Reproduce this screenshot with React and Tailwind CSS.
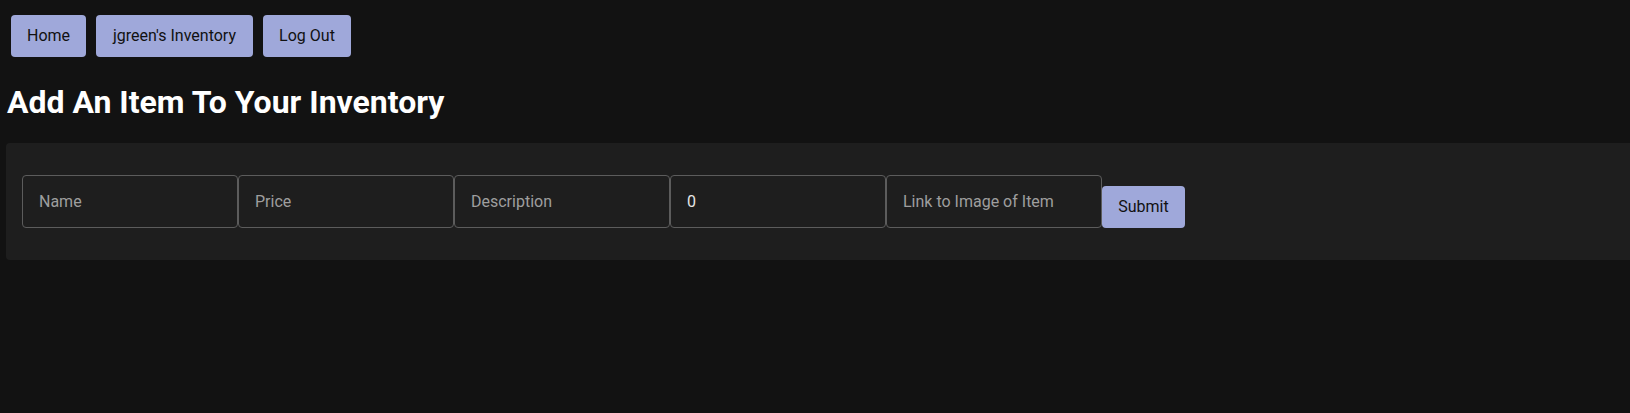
import React from "react";

export default function App() {
  const btn =
    "h-[42px] rounded-[4px] bg-[#9fa8da] text-[16px] text-[#111111] font-['Roboto',sans-serif] leading-none";
  const input =
    "box-border h-[53px] w-[216px] shrink-0 border border-[#5c5c5c] rounded-[4px] bg-transparent px-4 text-base text-[#e6e6e6] placeholder:text-[#9e9e9e] outline-none font-['Roboto',sans-serif]";
  return (
    <div className="min-h-screen bg-[#121212] overflow-hidden font-['Roboto',sans-serif]">
      <nav className="flex gap-[10px] pl-[11px] pt-[15px]">
        <button className={`${btn} w-[75px]`}>Home</button>
        <button className={`${btn} w-[157px]`}>jgreen's Inventory</button>
        <button className={`${btn} w-[88px]`}>Log Out</button>
      </nav>
      <h1 className="mt-[26px] ml-[7px] text-[32px] leading-[38px] font-bold text-white">
        Add An Item To Your Inventory
      </h1>
      <div className="mt-[22px] ml-[6px] rounded-l-[4px] bg-[#1e1e1e] py-8 pl-4 flex items-end">
        <input className={input} placeholder="Name" />
        <input className={input} placeholder="Price" />
        <input className={input} placeholder="Description" />
        <input className={input} defaultValue="0" />
        <input className={input} placeholder="Link to Image of Item" />
        <button className="h-[42px] w-[83px] rounded-[4px] bg-[#9fa8da] text-[16px] text-[#111111] leading-none">
          Submit
        </button>
      </div>
    </div>
  );
}
